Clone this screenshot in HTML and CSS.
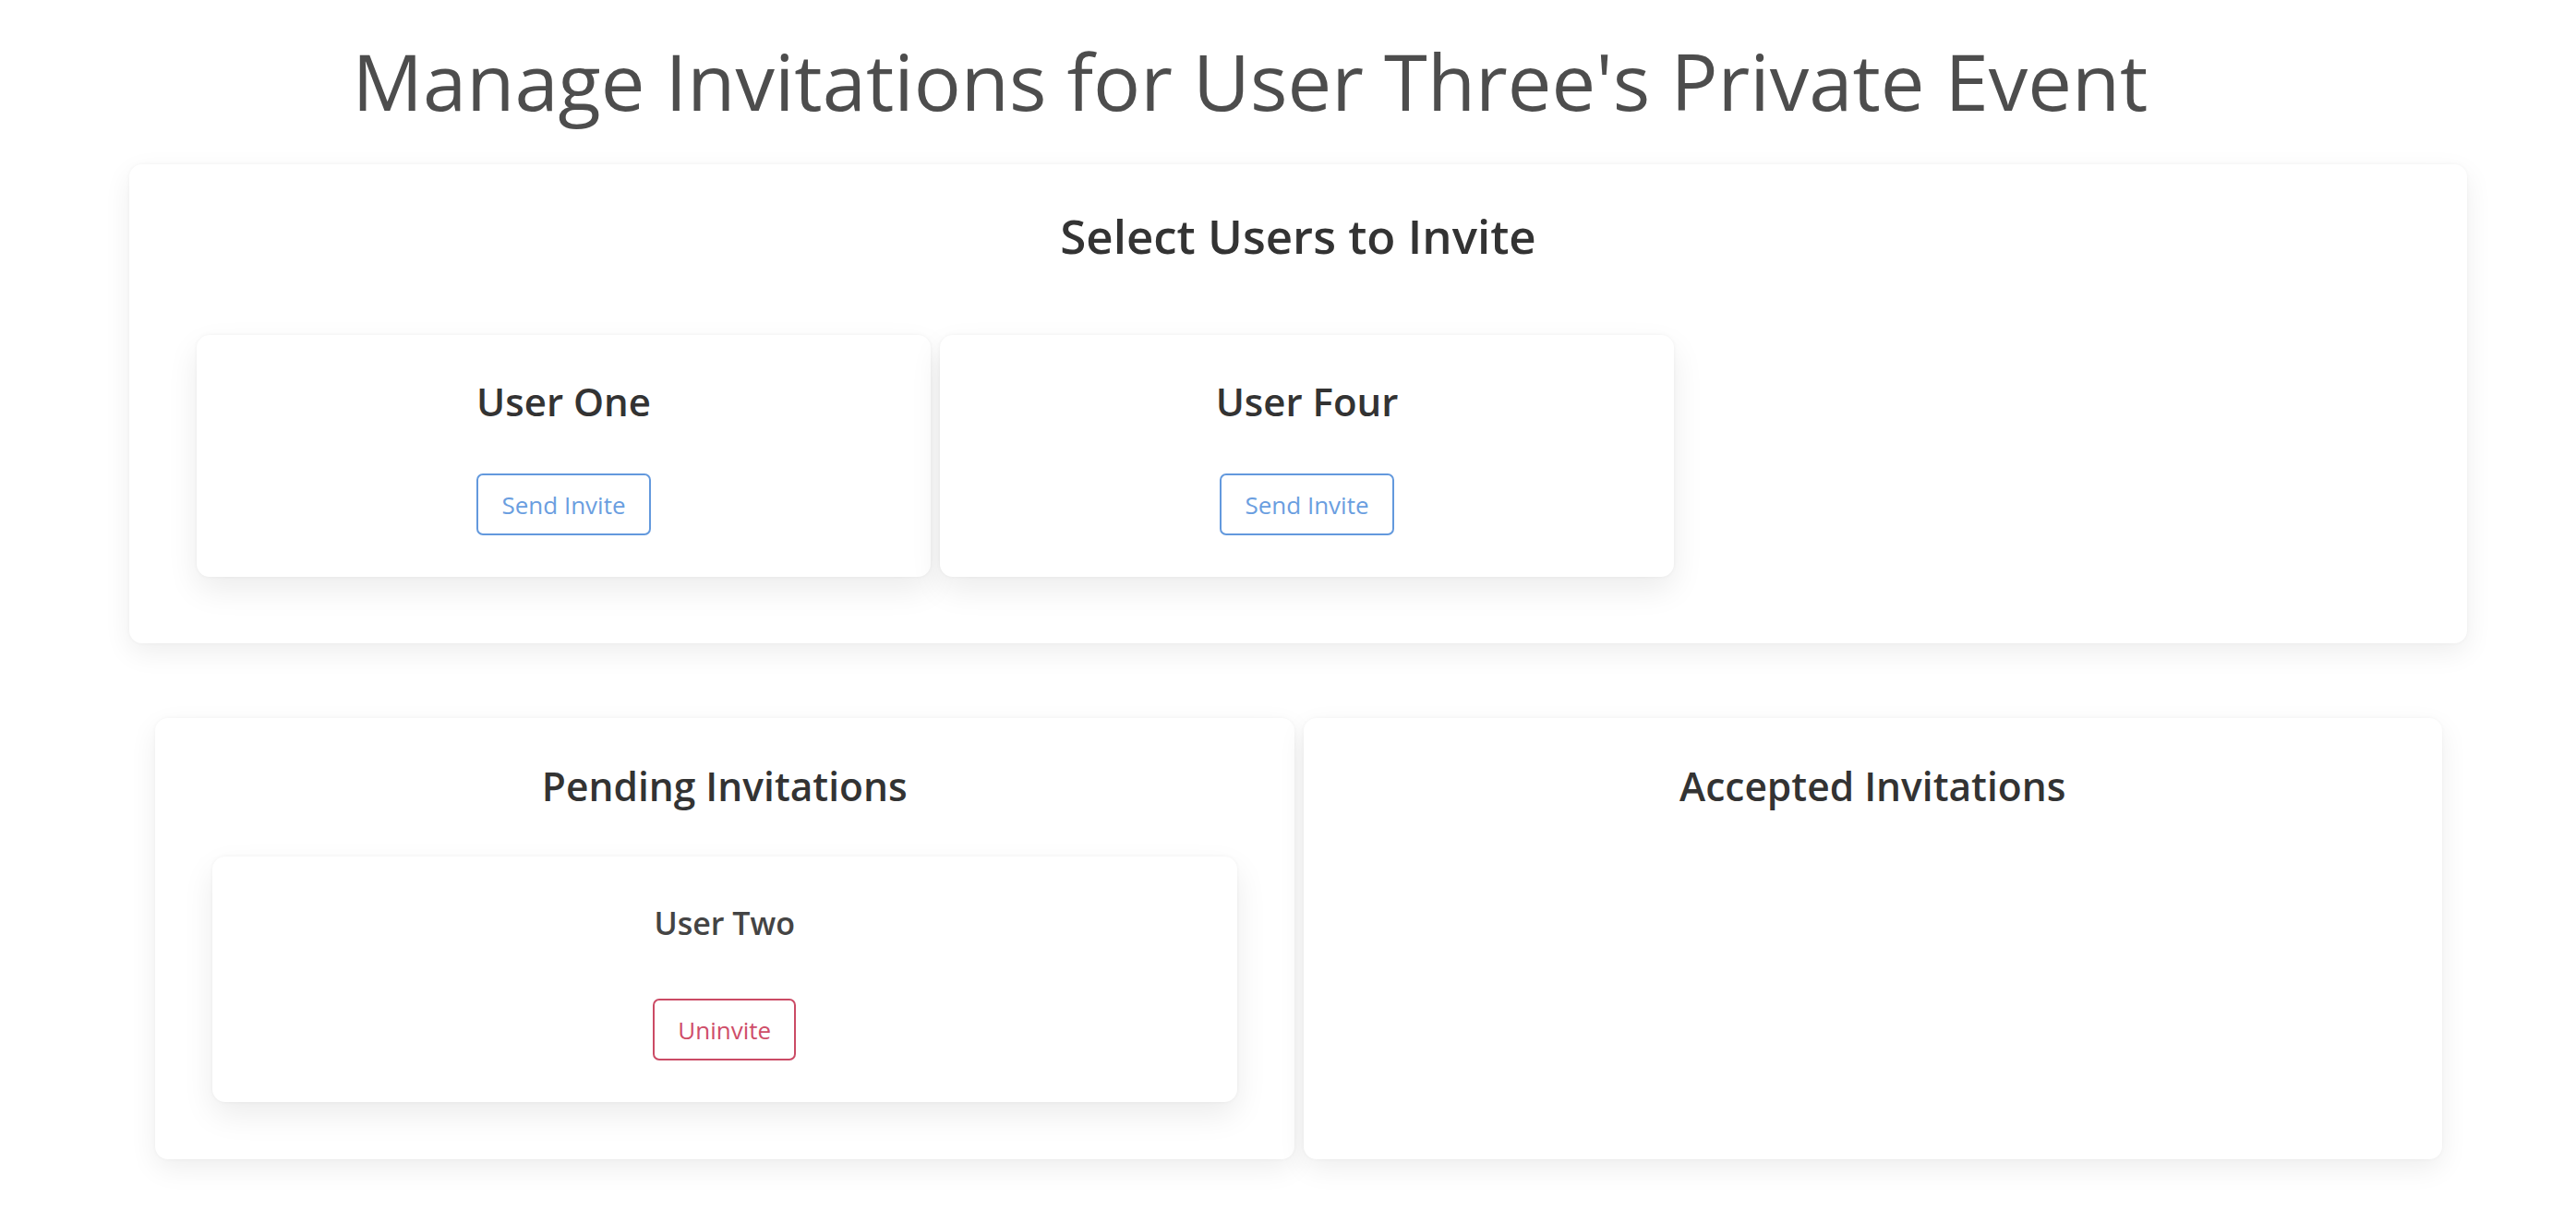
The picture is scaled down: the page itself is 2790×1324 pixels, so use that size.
FILE: index.html
```html
<!DOCTYPE html>
<html lang="en">
<head>
<meta charset="utf-8">
<title>Manage Invitations</title>
<link rel="stylesheet" href="styles.css">
</head>
<body>
<div class="page">
  <h1 class="page-title">Manage Invitations for User Three's Private Event</h1>

  <section class="panel select-panel">
    <h2 class="panel-title">Select Users to Invite</h2>
    <div class="user-row">
      <div class="user-card">
        <h3 class="user-name">User One</h3>
        <button class="btn btn-invite">Send Invite</button>
      </div>
      <div class="user-card">
        <h3 class="user-name">User Four</h3>
        <button class="btn btn-invite">Send Invite</button>
      </div>
    </div>
  </section>

  <div class="status-row">
    <section class="panel status-panel">
      <h3 class="status-title">Pending Invitations</h3>
      <div class="pending-card">
        <h4 class="pending-name">User Two</h4>
        <button class="btn btn-uninvite">Uninvite</button>
      </div>
    </section>
    <section class="panel status-panel">
      <h3 class="status-title">Accepted Invitations</h3>
    </section>
  </div>
</div>
</body>
</html>
```

FILE: styles.css
```css
* {
  box-sizing: border-box;
}

html, body {
  margin: 0;
  padding: 0;
  background: #ffffff;
}

body {
  font-family: "Open Sans", "Noto Sans", "Liberation Sans", sans-serif;
  color: #333333;
}

.page {
  width: 2790px;
  padding-bottom: 40px;
}

.page-title {
  margin: 37px 0 0 0;
  padding-right: 82px;
  text-align: center;
  font-size: 85px;
  line-height: 100px;
  font-weight: 400;
  color: #4d4d4d;
}

.panel {
  background: #ffffff;
  border-radius: 14px;
  box-shadow: 0 0 4px rgba(0, 0, 0, 0.04), 0 10px 30px rgba(0, 0, 0, 0.07);
}

.select-panel {
  margin: 41px 0 0 140px;
  width: 2532px;
  padding: 46px 73px 72px 73px;
}

.panel-title {
  margin: 0;
  text-align: center;
  font-size: 51px;
  line-height: 62px;
  font-weight: 600;
  color: #333333;
}

.user-row {
  margin-top: 77px;
  display: flex;
  gap: 10px;
}

.user-card {
  width: 795px;
  background: #ffffff;
  border-radius: 14px;
  box-shadow: 0 0 4px rgba(0, 0, 0, 0.05), 0 14px 34px rgba(0, 0, 0, 0.08);
  padding: 45px 20px 45px 20px;
  display: flex;
  flex-direction: column;
  align-items: center;
}

.user-name {
  margin: 0;
  font-size: 42px;
  line-height: 53px;
  font-weight: 600;
  color: #333333;
}

.btn {
  font-family: "Open Sans", "Noto Sans", "Liberation Sans", sans-serif;
  font-size: 26px;
  line-height: 42px;
  font-weight: 400;
  padding: 10.5px 25px;
  border-radius: 7px;
  background: #ffffff;
  border: 2px solid;
  cursor: pointer;
}

.btn-invite {
  margin-top: 52px;
  color: #6a9ee0;
  border-color: #6399dd;
}

.btn-uninvite {
  margin-top: 60px;
  color: #cf4d68;
  border-color: #cb4b65;
}

.status-row {
  margin: 81px 0 0 168px;
  width: 2477px;
  display: grid;
  grid-template-columns: 1fr 1fr;
  gap: 10px;
}

.status-panel {
  padding: 47px 62px 62px 62px;
}

.status-title {
  margin: 0;
  text-align: center;
  font-size: 42.5px;
  line-height: 53px;
  font-weight: 600;
  color: #333333;
}

.pending-card {
  margin-top: 50px;
  background: #ffffff;
  border-radius: 14px;
  box-shadow: 0 0 4px rgba(0, 0, 0, 0.05), 0 14px 34px rgba(0, 0, 0, 0.08);
  padding: 51px 20px 45px 20px;
  display: flex;
  flex-direction: column;
  align-items: center;
}

.pending-name {
  margin: 0;
  font-size: 34px;
  line-height: 43px;
  font-weight: 600;
  color: #444444;
}
```
